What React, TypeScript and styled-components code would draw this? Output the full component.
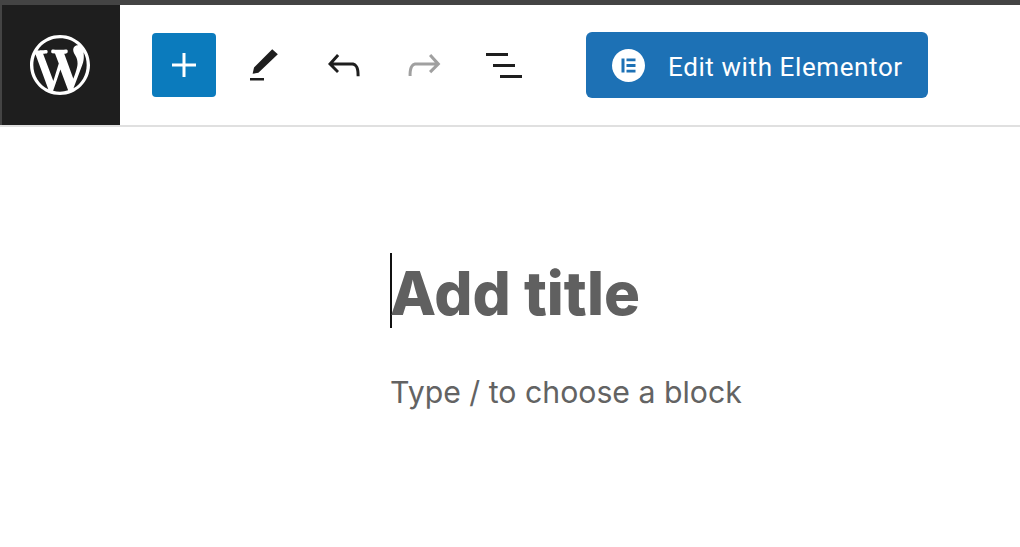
import React from 'react'
import styled, { createGlobalStyle } from 'styled-components'

const GlobalStyle = createGlobalStyle`
  html, body {
    margin: 0;
    padding: 0;
    background: #fff;
    font-family: Inter, "Liberation Sans", sans-serif;
  }
`

const Page = styled.div`
  width: 1020px;
  height: 547px;
  overflow: hidden;
  background: #fff;
`

const TopStrip = styled.div`
  height: 5px;
  background: #444;
`

const Toolbar = styled.header`
  display: flex;
  align-items: center;
  height: 120px;
  border-bottom: 2px solid #e0e0e0;
`

const LogoTile = styled.div`
  display: flex;
  align-items: center;
  justify-content: center;
  width: 120px;
  height: 120px;
  background: #1e1e1e;
  box-shadow: inset 2px 0 0 #444;
  color: #fff;
`

const Tools = styled.div`
  display: flex;
  align-items: center;
  gap: 8px;
  margin-left: 32px;
`

const InserterButton = styled.div`
  display: flex;
  align-items: center;
  justify-content: center;
  width: 64px;
  height: 64px;
  border-radius: 4px;
  background: #0b7bbd;
  color: #fff;
`

const HistoryGroup = styled.div`
  display: flex;
  align-items: center;
`

const ToolButton = styled.div<{ $muted?: boolean }>`
  display: flex;
  align-items: center;
  justify-content: center;
  width: 80px;
  height: 64px;
  color: ${({ $muted }) => ($muted ? '#a0a0a0' : '#1e1e1e')};
`

const ElementorButton = styled.div`
  display: flex;
  align-items: center;
  box-sizing: border-box;
  width: 342px;
  height: 66px;
  margin-left: 42px;
  padding-left: 26px;
  border-radius: 6px;
  background: #1d71b5;
  color: #fff;
  font-family: Roboto, sans-serif;
  font-size: 26px;
  letter-spacing: 0.6px;
`

const ElementorBadge = styled.span`
  display: flex;
  margin-right: 23px;
`

const ElementorLabel = styled.span`
  padding-top: 4px;
`

const Editor = styled.main`
  padding: 126px 0 0 390px;
`

const TitleField = styled.div`
  box-sizing: border-box;
  height: 75px;
  border-left: 2px solid #111;
  color: #606060;
  font-size: 60px;
  font-weight: 800;
  line-height: 80px;
  white-space: nowrap;
`

const TitleText = styled.span`
  margin-left: -2px;
`

const BlockHint = styled.p`
  margin: 42px 0 0;
  color: #636363;
  font-size: 30.25px;
  line-height: 44px;
  white-space: nowrap;
`

const WordPressLogo = () => (
  <svg width="60" height="60" viewBox="0 0 20 20" fill="currentColor">
    <path d="M20 10c0-5.51-4.49-10-10-10C4.48 0 0 4.49 0 10c0 5.52 4.48 10 10 10 5.51 0 10-4.48 10-10zM7.78 15.37L4.37 6.22c.55-.02 1.17-.08 1.17-.08.5-.06.44-1.13-.06-1.11 0 0-1.45.11-2.37.11-.18 0-.37 0-.58-.01C4.12 2.69 6.87 1.11 10 1.11c2.33 0 4.45.87 6.05 2.34-.68-.11-1.65.39-1.65 1.58 0 .74.45 1.36.9 2.1.35.61.55 1.36.55 2.46 0 1.49-1.4 5-1.4 5l-3.03-8.37c.54-.02.82-.17.82-.17.5-.05.44-1.25-.06-1.22 0 0-1.44.12-2.38.12-.87 0-2.33-.12-2.33-.12-.5-.03-.56 1.2-.06 1.22l.92.08 1.26 3.41zM17.41 10c.24-.64.74-1.87.43-4.25.7 1.29 1.05 2.71 1.05 4.25 0 3.29-1.73 6.24-4.4 7.78.97-2.59 1.94-5.2 2.92-7.78zM6.1 18.09C3.12 16.65 1.11 13.53 1.11 10c0-1.3.23-2.48.72-3.59C3.25 10.3 4.67 14.2 6.1 18.09zm4.03-6.63l2.58 6.98c-.86.29-1.76.45-2.71.45-.79 0-1.57-.11-2.29-.33.81-2.38 1.62-4.74 2.42-7.1z" />
  </svg>
)

const Icon = ({ d, size = 48 }: { d: string; size?: number }) => (
  <svg width={size} height={size} viewBox="0 0 24 24" fill="currentColor">
    <path d={d} />
  </svg>
)

const ElementorLogo = () => (
  <svg width="33" height="33" viewBox="0 0 33 33">
    <circle cx="16.5" cy="16.5" r="16.5" fill="#fff" />
    <path
      fill="#1d71b5"
      d="M9.5 9.5h3v14h-3zM14.5 9.5h9v2.8h-9zM14.5 15.1h9v2.8h-9zM14.5 20.7h9v2.8h-9z"
    />
  </svg>
)

const PLUS = 'M18 11.25h-5.25V6h-1.5v5.25H6v1.5h5.25V18h1.5v-5.25H18z'
const PENCIL = 'M19.9 5.8L16.7 3 6.3 13.4l-.8 3.6 3.3-.6L19.9 5.8zM4 20.9h8v-1.5H4v1.5z'
const UNDO =
  'M18.3 11.7c-.6-.6-1.4-.9-2.3-.9H6.7l2.9-3.3-1.1-1-4.5 5L8.5 16l1-1-2.7-2.7H16c.5 0 .9.2 1.3.5 1 1 1 3.4 1 4.5v.3h1.5v-.2c0-1.5 0-4.3-1.5-5.7z'
const REDO =
  'M15.6 6.5l-1.1 1 2.9 3.3H8c-.9 0-1.7.3-2.3.9-1.4 1.5-1.4 4.2-1.4 5.6v.2h1.5v-.3c0-1.1 0-3.5 1-4.5.3-.3.7-.5 1.3-.5h9.2L14.5 15l1.1 1.1 4.6-4.6-4.6-5z'
const LIST = 'M3 6h11v1.5H3V6zm3.5 5.5h11V13h-11v-1.5zM10 17h11v1.5H10V17z'

export default function App() {
  return (
    <Page>
      <GlobalStyle />
      <TopStrip />
      <Toolbar>
        <LogoTile>
          <WordPressLogo />
        </LogoTile>
        <Tools>
          <InserterButton>
            <Icon d={PLUS} />
          </InserterButton>
          <HistoryGroup>
            <ToolButton>
              <Icon d={PENCIL} size={42} />
            </ToolButton>
            <ToolButton>
              <Icon d={UNDO} />
            </ToolButton>
            <ToolButton $muted>
              <Icon d={REDO} />
            </ToolButton>
            <ToolButton>
              <Icon d={LIST} />
            </ToolButton>
          </HistoryGroup>
        </Tools>
        <ElementorButton>
          <ElementorBadge>
            <ElementorLogo />
          </ElementorBadge>
          <ElementorLabel>Edit with Elementor</ElementorLabel>
        </ElementorButton>
      </Toolbar>
      <Editor>
        <TitleField>
          <TitleText>Add title</TitleText>
        </TitleField>
        <BlockHint>Type / to choose a block</BlockHint>
      </Editor>
    </Page>
  )
}
